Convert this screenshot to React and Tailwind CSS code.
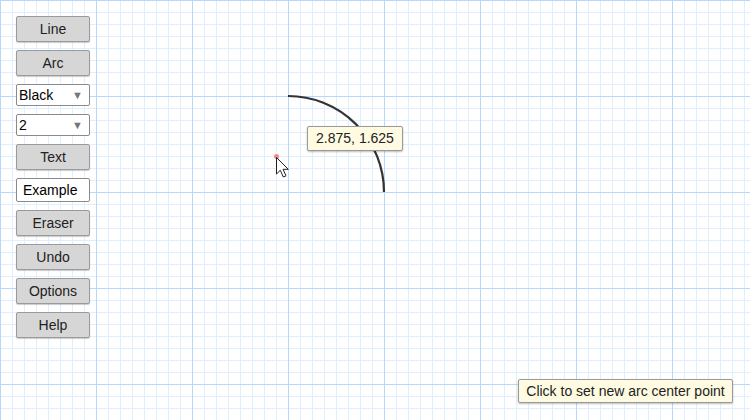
import React from "react";

function Grid() {
  const minor = [];
  const major = [];
  for (let x = 0; x <= 750; x += 12) {
    (x % 96 === 0 ? major : minor).push(<line key={"v" + x} x1={x + 0.5} y1={0} x2={x + 0.5} y2={420} />);
  }
  for (let y = 0; y <= 420; y += 12) {
    (y % 96 === 0 ? major : minor).push(<line key={"h" + y} x1={0} y1={y + 0.5} x2={750} y2={y + 0.5} />);
  }
  return (
    <svg className="absolute inset-0" width="750" height="420">
      <g stroke="#e0efff" strokeWidth="1">{minor}</g>
      <g stroke="#b5d8fb" strokeWidth="1">{major}</g>
      <path d="M288 96 A96 96 0 0 1 384 192" fill="none" stroke="#333" strokeWidth="2.2" />
      <circle cx="276.5" cy="156.5" r="2.5" fill="#f08a8a" />
      <path
        d="M276.5 157.5 L276.5 174 L280.3 170.3 L283.3 177 L286 175.8 L283 169.3 L288.3 169.3 Z"
        fill="#fff"
        stroke="#222"
        strokeWidth="1"
        strokeLinejoin="round"
      />
    </svg>
  );
}

function Btn({ children }) {
  return (
    <button className="h-[26px] w-[74px] rounded-[2px] border border-[#9a9a9a] bg-[#d6d6d6] text-[14px] text-[#222] shadow-[0_1px_1px_rgba(0,0,0,0.2)] leading-none">
      {children}
    </button>
  );
}

function Sel({ children }) {
  return (
    <div className="flex h-[22px] w-[74px] items-center justify-between rounded-[2px] border border-[#8a8a8a] bg-white pl-[2px] pr-[6px] text-[14px] text-black">
      <span>{children}</span>
      <span className="text-[11px] text-[#777]">▼</span>
    </div>
  );
}

export default function App() {
  return (
    <div className="relative h-[420px] w-[750px] overflow-hidden bg-white font-['Liberation_Sans',Arial,sans-serif]">
      <Grid />
      <div className="relative flex w-fit flex-col gap-[8px] pl-[16px] pt-[16px]">
        <Btn>Line</Btn>
        <Btn>Arc</Btn>
        <Sel>Black</Sel>
        <Sel>2</Sel>
        <Btn>Text</Btn>
        <div className="flex h-[24px] w-[74px] items-center rounded-[2px] border border-[#8a8a8a] bg-white pl-[6px] text-[14px] text-black">
          Example
        </div>
        <Btn>Eraser</Btn>
        <Btn>Undo</Btn>
        <Btn>Options</Btn>
        <Btn>Help</Btn>
      </div>
      <div className="absolute left-[307px] top-[126px] flex h-[25px] w-[96px] items-center justify-center rounded-[2px] border border-[#999] bg-[#fffbe3] text-[14px] text-[#222] shadow-[0_1px_2px_rgba(0,0,0,0.25)]">
        2.875, 1.625
      </div>
      <div className="absolute left-[518px] top-[379px] flex h-[24px] w-[215px] items-center justify-center rounded-[2px] border border-[#999] bg-[#fffbe3] text-[14px] text-[#222] shadow-[0_1px_2px_rgba(0,0,0,0.25)]">
        Click to set new arc center point
      </div>
    </div>
  );
}
